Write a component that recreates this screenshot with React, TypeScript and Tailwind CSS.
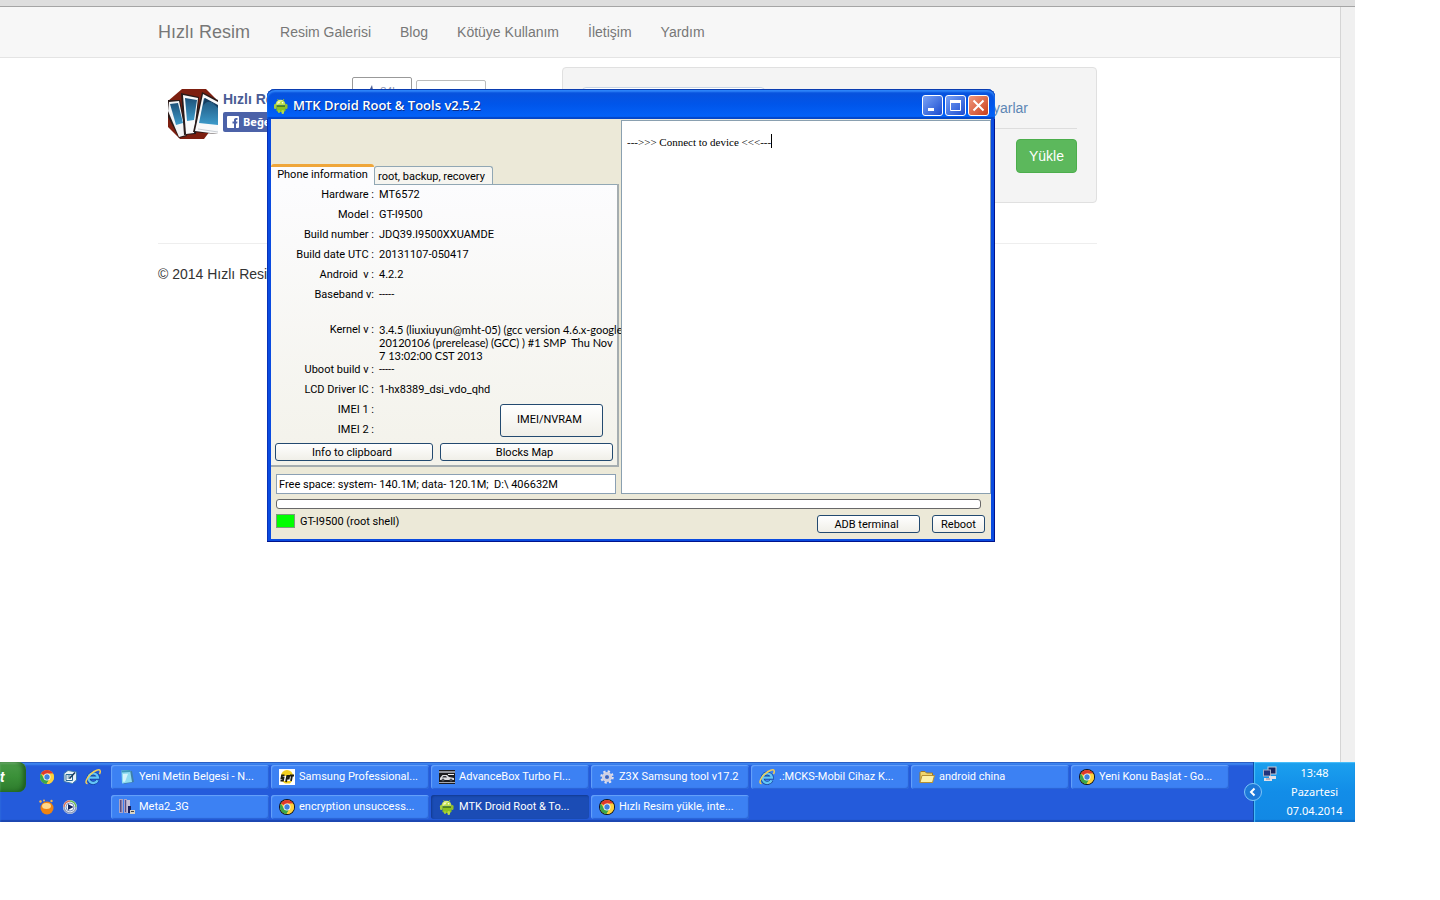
import { useState } from "react";
import type { ReactNode } from "react";

interface TaskItem {
  title: string;
  icon: ReactNode;
  active?: boolean;
}

function ChromeIcon({ outlined }: { outlined?: boolean }) {
  return (
    <svg viewBox="0 0 16 16" className="h-4 w-4 shrink-0">
      {outlined && <circle cx="8" cy="8" r="8" fill="#111" />}
      <circle cx="8" cy="8" r="7" fill="#fbd13c" />
      <path d="M8 8 1.9 4.5A7 7 0 0 1 14.1 4.6L8 4.8Z" fill="#df3a2c" />
      <path d="M1.9 4.5A7 7 0 0 0 7.6 15L10.6 9.8 8 8 5 9.6Z" fill="#3ba64b" />
      <path d="M8 4.8h6.2A7 7 0 0 1 7.6 15l3.2-5.4Z" fill="#fbd13c" />
      <circle cx="8" cy="8" r="3.5" fill="#fff" />
      <circle cx="8" cy="8" r="2.7" fill="#3f82dc" />
    </svg>
  );
}

function ExplorerIcon() {
  return (
    <svg viewBox="0 0 16 16" className="h-4 w-4 shrink-0">
      <path
        d="M12.6 11.2A4.8 4.8 0 1 1 13 8.6H4.2"
        fill="none"
        stroke="#123f94"
        strokeWidth="3.6"
      />
      <path
        d="M12.6 11.2A4.8 4.8 0 1 1 13 8.6H4.2"
        fill="none"
        stroke="#63c5f8"
        strokeWidth="2.4"
      />
      <path
        d="M2.6 14.6C-.6 14.8 1.4 9 5.6 5.2 9.8 1.2 14.6-.4 15.2 1.8c.3 1-.1 2-.8 3.2"
        fill="none"
        stroke="#f2cd56"
        strokeWidth="1.5"
      />
    </svg>
  );
}

function AndroidIcon() {
  return (
    <svg viewBox="0 0 16 16" className="h-4 w-4 shrink-0">
      <path d="m4.5 1 1.5 2M11 1 9.5 3" stroke="#8fb92e" strokeWidth="1" />
      <path d="M2.5 7C2.5 0 12.5 0 12.5 7Z" fill="#bfe04e" />
      <path d="M4 4.5C5 2 8 1.5 10 2.5 8 3 6 4.5 5 6.5H3.5Z" fill="#e2f08e" />
      <circle cx="6" cy="4.8" r=".8" fill="#fff" />
      <circle cx="9.6" cy="4.8" r=".8" fill="#fff" />
      <path d="M3.5 7.5h9v5L11 14H5l-1.5-1.5Z" fill="#8cc220" />
      <path d="M3.5 7.5h9V9h-9Z" fill="#4f8418" />
      <rect x="1" y="6" width="2.5" height="5" rx="1.2" fill="#a8d13c" />
      <rect x="12" y="6" width="2.5" height="5" rx="1.2" fill="#93bf2c" />
      <rect x="5" y="12" width="2" height="3" rx="1" fill="#a2cd38" />
      <rect x="8.5" y="12" width="2.5" height="4" rx="1.2" fill="#b6dc4a" />
    </svg>
  );
}

function NotepadIcon() {
  return (
    <svg viewBox="0 0 16 16" className="h-4 w-4 shrink-0">
      <path d="M4 2h9l2 11-10 2Z" fill="#3f7fa8" />
      <path d="M2.5 1.5 11 1l2 12-10 1.5Z" fill="#8fdcf0" />
      <path d="M2.5 1.5 11 1l.4 2-8.8.5Z" fill="#3d99bb" />
      <path d="m4 5 5-.3-3 8H4Z" fill="#d3f4fb" />
    </svg>
  );
}

function SptIcon() {
  return (
    <svg viewBox="0 0 16 16" className="h-4 w-4 shrink-0">
      <path fill="#fff" d="M0 0h16v16H0z" />
      <path d="M2 7a6 6 0 0 1 12 0Z" fill="#f3cf1e" />
      <path d="M3 12h10l-2 2.5H6Z" fill="#f3cf1e" />
      <path
        d="M5.5 6.5H3L2.5 9h2L4 11.5H1.5M7 13l1.2-6h2l-.5 2.5H7.8M11 6.5h4M13 6.5l-1 5.5"
        fill="none"
        stroke="#1d1d12"
        strokeWidth="1.8"
      />
    </svg>
  );
}

function AdvanceBoxIcon() {
  return (
    <svg viewBox="0 0 16 16" className="h-4 w-4 shrink-0">
      <path fill="#1b1b1e" d="M0 1h16v14H0z" />
      <path d="M0 2h16v2H0z" fill="#8e9098" />
      <path d="M1 9 3.5 6H8l2 2 5 1v2H1Z" fill="#dcdce0" />
      <path d="M3 8.5 4.5 7H7l1 1.5Z" fill="#33343a" />
      <path d="M9 5.5h6" stroke="#f1f1f3" />
      <circle cx="4" cy="11" r="1.5" fill="#494b52" />
      <circle cx="12" cy="11" r="1.5" fill="#494b52" />
      <path d="M0 13.5h16" stroke="#a7a9b0" />
    </svg>
  );
}

function GearIcon() {
  return (
    <svg viewBox="0 0 16 16" className="h-4 w-4 shrink-0">
      <circle cx="8" cy="8" r="5.5" fill="none" stroke="#dfe0ec" strokeWidth="2.5" strokeDasharray="2.2 2.12" />
      <circle cx="8" cy="8" r="3.6" fill="none" stroke="#cfd0e3" strokeWidth="3" />
      <circle cx="8" cy="8" r="1.6" fill="#4d62a8" />
    </svg>
  );
}

function FolderIcon() {
  return (
    <svg viewBox="0 0 16 16" className="h-4 w-4 shrink-0">
      <path d="M1 13.5V3.5L2 2.5h4l1.5 1.5H13.5v9.5Z" fill="#f1d66c" stroke="#9c7a28" />
      <path d="M1 13.5 3 6.5H15.5L13.5 13.5Z" fill="#fdf2a8" stroke="#b48f33" />
    </svg>
  );
}

function MetaIcon() {
  return (
    <svg viewBox="0 0 16 16" className="h-4 w-4 shrink-0">
      <path d="M0 0h4v14H0zM5 0h3v14H5z" fill="#a9a2c4" />
      <path d="M1 1h1.5v12H1zM6 1h1v12H6z" fill="#564e84" />
      <path d="M8 1h3v13H8z" fill="#c4bfd5" />
      <path d="M9 7h3v7H9z" fill="#18205e" />
      <path d="M11 11h5v4h-5z" fill="#d7d2c4" />
      <path d="M12 12.5h3" stroke="#444" />
    </svg>
  );
}

function DesktopIcon() {
  return (
    <svg viewBox="0 0 16 16" className="h-4 w-4 shrink-0">
      <path d="M2 4.5 6 1.5 14.5 3v8l-4 3.5L2 12.5Z" fill="#e9f2f8" stroke="#3f7cab" />
      <path d="M4 5.5h6.5v6H4z" fill="#fff" stroke="#286a94" />
      <path d="M5.5 7h3M5.5 9h3" stroke="#256d91" />
      <path d="m7.5 9.5 5.5-6" stroke="#16395b" strokeWidth="1.5" />
    </svg>
  );
}

function OrangeIcon() {
  return (
    <svg viewBox="0 0 16 16" className="h-4 w-4 shrink-0">
      <circle cx="8" cy="9" r="6.5" fill="#ef8312" />
      <ellipse cx="7.5" cy="7" rx="4.5" ry="3" fill="#ffd98c" />
      <circle cx="1.5" cy="2.5" r="1.2" fill="#f9b64c" />
      <circle cx="5" cy="1.5" r="1" fill="#f9b64c" />
      <circle cx="12.5" cy="2" r="1.2" fill="#f9b64c" />
    </svg>
  );
}

function MediaIcon() {
  return (
    <svg viewBox="0 0 16 16" className="h-4 w-4 shrink-0">
      <circle cx="8" cy="8" r="7" fill="#e8edf5" />
      <path d="M8 2A6 6 0 0 0 2 8" fill="none" stroke="#d9745a" strokeWidth="1.5" />
      <path d="M8 2A6 6 0 0 1 14 8" fill="none" stroke="#6cbb56" strokeWidth="1.5" />
      <path d="M2 8a6 6 0 0 0 12 0" fill="none" stroke="#8b9bc0" strokeWidth="1.5" />
      <circle cx="8" cy="8" r="4" fill="#f9fbff" stroke="#7b90bc" />
      <path d="m6 5 5.5 3L6 11Z" fill="#16275f" />
    </svg>
  );
}

function NetworkIcon() {
  return (
    <svg viewBox="0 0 16 16" className="h-4 w-4 shrink-0">
      <path d="M5.5.5h9v8h-9z" fill="#c7cad8" />
      <path d="M6.5 1.5h7v6h-7z" fill="#17245e" />
      <path d="M1 3.5h8v7H1z" fill="#a8adc2" />
      <path d="M2 4.5h6v5H2z" fill="#22337c" />
      <path d="M7 10h7v3H7zM2 12h8v3H2z" fill="#e1dfe6" />
      <path d="M4 13h4" stroke="#8b7d94" />
    </svg>
  );
}

function PageLogo() {
  return (
    <svg viewBox="0 0 50 50" className="h-[50px] w-[50px] shrink-0">
      <defs>
        <linearGradient id="sky" x1="0" y1="0" x2="0" y2="1">
          <stop offset="0" stopColor="#1d5179" />
          <stop offset="1" stopColor="#3d9bcb" />
        </linearGradient>
      </defs>
      <path d="M14 0h24l10 10v24L36 50H12L0 38V12Z" fill="#7d1f10" />
      <path d="M0 11h12l7 36-8 2L0 28Z" fill="#2b1a18" />
      <path d="m1 13 10-1 7 34-7 2L0 22Z" fill="#f2f4f6" />
      <path d="m2 15 8-1 5 20-7 2Z" fill="url(#sky)" />
      <path d="m13 4 18 4-3 37-12 1Z" fill="#271a1a" />
      <path d="m15 6 15 3-4 35-8 1Z" fill="#f8f9fa" />
      <path d="m17 9 12 2-3 20-7 1Z" fill="url(#sky)" />
      <path d="m34 3 16 8v34l-25-2Z" fill="#271a1a" />
      <path d="m35 5 15 8v32l-23-3Z" fill="#f8f9fa" />
      <path d="m36 9 14 8v19l-19-2Z" fill="url(#sky)" />
      <path d="M35 17c4-7 9-5 15 2v-3L37 9Z" fill="#143c5f" />
      <path d="m30 40 20 3" stroke="#c9ced4" />
    </svg>
  );
}

const NAV_LINKS = ["Resim Galerisi", "Blog", "Kötüye Kullanım", "İletişim", "Yardım"];

function SiteNav() {
  return (
    <nav className="flex h-[51px] items-center border-b border-[#e4e4e4] bg-[#f7f7f7] pl-[158px] text-sm text-[#777]">
      <a href="#" className="mr-[30px] text-lg">
        Hızlı Resim
      </a>
      <div className="flex gap-[29px]">
        {NAV_LINKS.map((label) => (
          <a key={label} href="#">
            {label}
          </a>
        ))}
      </div>
    </nav>
  );
}

function SiteBody() {
  return (
    <main className="ml-[158px] mr-[243px] text-sm text-[#333]">
      <div className="flex justify-between pt-[9px]">
        <div className="flex pl-2.5 pt-2.5">
          <div className="flex gap-[5px] pt-3">
            <PageLogo />
            <div className="w-[120px]">
              <a href="#" className="block h-[23px] font-bold leading-5 text-[#4a5c94]">
                Hızlı Resim
              </a>
              <button
                type="button"
                className="flex h-5 items-center gap-1 rounded-xs bg-[#4c62a8] px-1 font-['Noto_Sans'] text-[11px] font-bold text-white"
              >
                <svg viewBox="0 0 12 12" className="h-3 w-3">
                  <rect width="12" height="12" rx="1" fill="#fff" />
                  <path d="M7 12V7.5H5.5V5.5H7V4c0-1.5 1-2 3.5-2v1.8C9 3.8 9 4 9 5.5h1.5l-.3 2H9V12Z" fill="#4c62a8" />
                </svg>
                Beğen
              </button>
            </div>
          </div>
          <div className="ml-[9px] flex items-start gap-1">
            <button
              type="button"
              className="flex h-6 w-[60px] items-start justify-center gap-1 rounded-t-xs border border-[#999] bg-white pt-1.5 text-[11px] text-[#8a93b0]"
            >
              <svg viewBox="0 0 10 10" className="mt-px h-2.5 w-2.5">
                <path d="M6 0 4 4H1v6h7l2-5H7Z" fill="#4a5c94" />
              </svg>
              84k
            </button>
            <div className="mt-[3px] h-5 w-[70px] rounded-xs border border-[#bbb]" />
          </div>
        </div>
        <section className="flex h-[136px] w-[535px] flex-col rounded border border-[#e0e0e0] bg-[#f4f4f4] px-[19px] pt-[19px]">
          <div className="flex h-[42px] items-start justify-between border-b border-[#ddd]">
            <input aria-label="Resim" className="h-[34px] w-[183px] rounded border border-[#c8d4e4] bg-white" />
            <a href="#" className="pr-[49px] pt-[11px] text-[#5d87b5]">
              Ayarlar
            </a>
          </div>
          <button
            type="button"
            className="mt-2.5 h-[34px] w-[61px] self-end rounded border border-[#4cae4c] bg-[#5cb85c] text-white"
          >
            Yükle
          </button>
        </section>
      </div>
      <hr className="mt-10 border-[#eee]" />
      <footer className="pt-5">© 2014 Hızlı Resim</footer>
    </main>
  );
}

const PHONE_INFO = [
  ["Hardware :", "MT6572"],
  ["Model :", "GT-I9500"],
  ["Build number :", "JDQ39.I9500XXUAMDE"],
  ["Build date UTC :", "20131107-050417"],
  ["Android  v :", "4.2.2"],
  ["Baseband v:", "-----"],
];

const KERNEL = "3.4.5 (liuxiuyun@mht-05) (gcc version 4.6.x-google\n20120106 (prerelease) (GCC) ) #1 SMP  Thu Nov\n7 13:02:00 CST 2013";

function InfoRow({ label, value }: { label: string; value?: string }) {
  return (
    <div className="flex h-5 items-center whitespace-pre">
      <dt className="w-[103px] shrink-0 text-right">{label}</dt>
      <dd className="pl-[5px]">{value}</dd>
    </div>
  );
}

function XpButton({ children, className }: { children: ReactNode; className: string }) {
  return (
    <button
      type="button"
      className={`rounded-[3px] border border-[#234a70] bg-gradient-to-b from-white to-[#f0efe8] ${className}`}
    >
      {children}
    </button>
  );
}

function TitleButton({ label, close, children }: { label: string; close?: boolean; children: ReactNode }) {
  return (
    <button
      type="button"
      aria-label={label}
      className={`flex h-[21px] w-[21px] items-center justify-center rounded-[3px] border border-white bg-gradient-to-br ${
        close ? "from-[#f0977c] to-[#c83c12]" : "from-[#7ba2f5] to-[#1c49cf]"
      }`}
    >
      <svg viewBox="0 0 15 15" className="h-[15px] w-[15px]">
        {children}
      </svg>
    </button>
  );
}

function ToolWindow() {
  const [tab, setTab] = useState("info");

  return (
    <div className="absolute left-[267px] top-[89px] flex w-[728px] flex-col rounded-t-lg bg-[#0a4be0] font-['Roboto',sans-serif] text-[11px] text-black shadow-[inset_-1px_-1px_0_#00138c,inset_1px_0_0_#0831b8]">
      <header className="flex h-[30px] items-center gap-1 rounded-t-lg bg-gradient-to-b from-[#0a50d8] via-[#0055ea] to-[#0464fb] pl-1.5 pr-1.5 pt-[3px] shadow-[inset_0_1px_0_#0a3cb0,inset_0_3px_2px_#2f86fa,inset_0_-2px_1px_#0446c8]">
        <AndroidIcon />
        <h1 className="grow pt-px font-['Open_Sans'] text-[13px] font-semibold text-white [text-shadow:1px_1px_0_#0a2f8c]">
          MTK Droid Root &amp; Tools v2.5.2
        </h1>
        <div className="flex gap-0.5">
          <TitleButton label="Minimize">
            <path d="M3 10h6v3H3z" fill="#fff" />
          </TitleButton>
          <TitleButton label="Maximize">
            <path d="M2.5 3.5h10v9h-10z" fill="none" stroke="#fff" />
            <path d="M2 2h11v3H2z" fill="#fff" />
          </TitleButton>
          <TitleButton label="Close" close>
            <path d="m2.5 2.5 10 10m0-10-10 10" stroke="#fff" strokeWidth="2" />
          </TitleButton>
        </div>
      </header>

      <div className="mx-1 mb-[3px] bg-[#ece9d8] pb-1.5 pt-px">
        <div className="flex">
          <div className="flex w-[350px] flex-col">
            <div role="tablist" className="flex h-16 items-end">
              <button
                type="button"
                role="tab"
                aria-selected={tab === "info"}
                onClick={() => setTab("info")}
                className="h-5 w-[103px] rounded-t-[3px] border-t-[3px] border-[#efa63a] bg-[#fcfcfe] pb-[3px]"
              >
                Phone information
              </button>
              <button
                type="button"
                role="tab"
                aria-selected={tab === "root"}
                onClick={() => setTab("root")}
                className="h-[18px] w-[119px] rounded-t-[3px] border border-b-0 border-[#91a7b4] bg-[#f6f5f0] pr-1 pt-0.5"
              >
                root, backup, recovery
              </button>
            </div>
            <div className="mr-0.5 h-[283px] border-b-2 border-r-2 border-[#a5adb0] bg-gradient-to-b from-[#fcfcfe] to-[#f3f2ea]">
              <div className="ml-[103px] h-px bg-[#91a7b4]" />
              <dl>
                {PHONE_INFO.map(([label, value]) => (
                  <InfoRow key={label} label={label} value={value} />
                ))}
                <div className="flex h-[55px] whitespace-pre pt-[18px] leading-[13px]">
                  <dt className="w-[103px] shrink-0 text-right">Kernel v :</dt>
                  <dd className="pl-[5px] font-['Lato']">{KERNEL}</dd>
                </div>
                <InfoRow label="Uboot build v :" value="-----" />
                <InfoRow label="LCD Driver IC :" value="1-hx8389_dsi_vdo_qhd" />
              </dl>
              <div className="flex items-center justify-between pr-3.5">
                <dl>
                  <InfoRow label="IMEI 1 :" />
                  <InfoRow label="IMEI 2 :" />
                </dl>
                <XpButton className="h-[33px] w-[103px] pr-1">IMEI/NVRAM</XpButton>
              </div>
              <div className="flex gap-[7px] pl-1 pt-[3px]">
                <XpButton className="h-[18px] w-[158px] pr-1 leading-none">Info to clipboard</XpButton>
                <XpButton className="h-[18px] w-[173px] pr-1 leading-none">Blocks Map</XpButton>
              </div>
            </div>
            <input
              readOnly
              aria-label="Free space"
              defaultValue="Free space: system- 140.1M; data- 120.1M;  D:\ 406632M"
              className="ml-[5px] mr-[5px] mt-[7px] h-5 border border-[#8ba0b4] bg-white px-0.5"
            />
          </div>
          <div className="flex grow items-start border border-[#8aa0b0] bg-white pl-[5px] pt-[13px]">
            <textarea
              readOnly
              rows={1}
              aria-label="Log"
              defaultValue="--->>> Connect to device <<<---"
              className="field-sizing-content resize-none overflow-hidden font-['Liberation_Serif'] text-[11px] leading-4"
            />
            <span className="h-3.5 w-px bg-black" />
          </div>
        </div>
        <div role="progressbar" aria-label="Progress" className="ml-[5px] mr-2.5 mt-[5px] h-2.5 rounded-[3px] border border-[#686868] bg-white" />
        <div className="flex h-6 items-start pl-[5px] pr-1.5 pt-[5px]">
          <span className="h-3.5 w-[19px] border border-[#7c9c7c] bg-[#00ff00]" />
          <span className="grow pl-[5px] leading-4">GT-I9500 (root shell)</span>
          <XpButton className="mr-3 mt-px h-[18px] w-[103px] pr-1 leading-none">ADB terminal</XpButton>
          <XpButton className="mt-px h-[18px] w-[53px] leading-none">Reboot</XpButton>
        </div>
      </div>
    </div>
  );
}

const TASKS: TaskItem[] = [
  { title: "Yeni Metin Belgesi - N...", icon: <NotepadIcon /> },
  { title: "Samsung Professional...", icon: <SptIcon /> },
  { title: "AdvanceBox Turbo Fl...", icon: <AdvanceBoxIcon /> },
  { title: "Z3X Samsung tool v17.2", icon: <GearIcon /> },
  { title: ".:MCKS-Mobil Cihaz K...", icon: <ExplorerIcon /> },
  { title: "android china", icon: <FolderIcon /> },
  { title: "Yeni Konu Başlat - Go...", icon: <ChromeIcon outlined /> },
  { title: "Meta2_3G", icon: <MetaIcon /> },
  { title: "encryption unsuccess...", icon: <ChromeIcon outlined /> },
  { title: "MTK Droid Root & To...", icon: <AndroidIcon />, active: true },
  { title: "Hızlı Resim yükle, inte...", icon: <ChromeIcon outlined /> },
];

function Taskbar() {
  return (
    <footer className="flex h-[60px] items-stretch bg-[#245bdb] font-['Roboto',sans-serif] text-[11px] text-white shadow-[inset_0_1px_0_#2a5fc4,inset_0_3px_2px_#3f87f0,inset_0_-2px_1px_#1c46b0]">
      <button
        type="button"
        aria-label="Start"
        className="flex h-[30px] w-[26px] items-center rounded-r-lg bg-gradient-to-b from-[#4a9a48] via-[#3a9038] to-[#2d7a2c] text-sm font-bold italic shadow-[inset_-3px_0_4px_#1d5c1e,inset_0_2px_2px_#7cc07a]"
      >
        t
      </button>
      <div className="ml-[9px] mr-1.5 grid w-[69px] grid-cols-3 grid-rows-2 place-items-center">
        <ChromeIcon />
        <DesktopIcon />
        <ExplorerIcon />
        <OrangeIcon />
        <MediaIcon />
      </div>
      <div className="grid grow grid-cols-[repeat(7,minmax(0,160px))] grid-rows-2">
        {TASKS.map((task) => (
          <button
            key={task.title}
            type="button"
            className={`mx-px my-[3px] flex items-center gap-1 overflow-hidden rounded-[3px] pl-2 text-left whitespace-nowrap ${
              task.active
                ? "bg-[#1b4cb5] shadow-[inset_1px_1px_2px_#123a90]"
                : "bg-[#3c81f3] shadow-[inset_1px_1px_1px_#68a2fa,inset_-1px_-1px_1px_#2a62d4]"
            }`}
          >
            {task.icon}
            {task.title}
          </button>
        ))}
      </div>
      <div className="relative flex w-[102px] border-l border-[#0f4fa8] bg-gradient-to-b from-[#1ba0ee] via-[#128de8] to-[#1288e4] pl-2 pr-1 shadow-[inset_1px_1px_1px_#4cc0fa,inset_0_-2px_1px_#0f6fc8]">
        <button
          type="button"
          aria-label="Show hidden icons"
          className="absolute -left-2.5 top-[21px] flex h-[18px] w-[18px] items-center justify-center rounded-full border border-[#7cc4f8] bg-[#1c78d8]"
        >
          <svg viewBox="0 0 10 10" className="h-2.5 w-2.5">
            <path d="M6.5 1.5 3 5l3.5 3.5" fill="none" stroke="#fff" strokeWidth="2" />
          </svg>
        </button>
        <div className="pt-1">
          <NetworkIcon />
        </div>
        <div className="grow pt-px text-center font-['Noto_Sans'] leading-[19px]">
          <div>13:48</div>
          <div>Pazartesi</div>
          <div>07.04.2014</div>
        </div>
      </div>
    </footer>
  );
}

export default function App() {
  return (
    <div className="min-h-screen bg-white pb-[78px] pr-[85px] font-['Liberation_Sans',sans-serif]">
      <div className="relative flex min-h-[calc(100vh-78px)] flex-col">
        <div className="h-[7px] border-b border-[#a5a5a5] bg-[#dedede]" />
        <div className="flex grow">
          <div className="min-w-0 grow">
            <SiteNav />
            <SiteBody />
          </div>
          <div className="w-[15px] border-l border-[#d5d5d5] bg-[#f0f0f0]" />
        </div>
        <ToolWindow />
        <Taskbar />
      </div>
    </div>
  );
}
